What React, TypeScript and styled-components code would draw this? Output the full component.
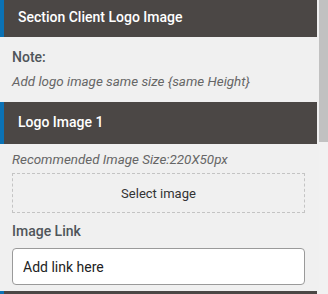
import React from 'react';
import styled, { createGlobalStyle } from 'styled-components';

const GlobalStyle = createGlobalStyle`
  html, body {
    margin: 0;
    padding: 0;
    background: #f0f0f0;
    font-family: Roboto, "Liberation Sans", Arial, sans-serif;
  }
`;

const Frame = styled.div`
  display: flex;
  width: 328px;
  height: 294px;
  overflow: hidden;
  background: #f0f0f0;
`;

const Panel = styled.div`
  width: 317px;
  flex: none;
  display: flex;
  flex-direction: column;
`;

const Gutter = styled.div`
  width: 2px;
  flex: none;
`;

const Scrollbar = styled.div`
  flex: 1;
  background: #f1f1f1;
`;

const Thumb = styled.div`
  height: 142px;
  background: #c1c1c1;
`;

const Header = styled.div<{ $h: number; $pb?: number }>`
  height: ${p => p.$h}px;
  flex: none;
  box-sizing: border-box;
  display: flex;
  align-items: center;
  padding: 0 0 ${p => p.$pb ?? 0}px 14px;
  background: #4b4745;
  border-left: 4px solid #0b72b5;
  color: #fff;
  font-size: 14px;
  font-weight: 500;
`;

const Body = styled.div<{ $pad: string }>`
  padding: ${p => p.$pad};
  display: flex;
  flex-direction: column;
`;

const Label = styled.div<{ $mt?: number }>`
  margin-top: ${p => p.$mt ?? 0}px;
  font-size: 14px;
  font-weight: 500;
  color: #4f555a;
  line-height: 20px;
`;

const Hint = styled.div<{ $mt?: number }>`
  margin-top: ${p => p.$mt ?? 0}px;
  font-size: 13.4px;
  font-style: italic;
  color: #666;
  line-height: 18px;
`;

const DropZone = styled.button`
  margin-top: 4px;
  width: 293px;
  height: 40px;
  box-sizing: border-box;
  border: 1px dashed #c4c4c4;
  background: transparent;
  font-family: inherit;
  font-size: 13px;
  color: #333;
  cursor: pointer;
`;

const LinkInput = styled.input`
  margin-top: 7px;
  width: 293px;
  height: 37px;
  box-sizing: border-box;
  border: 1px solid #9a9a9a;
  border-radius: 4px;
  background: #fff;
  padding: 0 10px;
  font-family: inherit;
  font-size: 14px;
  color: #222;
  &::placeholder {
    color: #222;
  }
`;

export default function App() {
  return (
    <>
      <GlobalStyle />
      <Frame>
        <Panel>
          <Header $h={37} $pb={3}>Section Client Logo Image</Header>
          <Body $pad="10px 12px 11px">
            <Label>Note:</Label>
            <Hint $mt={6}>Add logo image same size {'{same Height}'}</Hint>
          </Body>
          <Header $h={42} $pb={2}>Logo Image 1</Header>
          <Body $pad="7px 12px 6px">
            <Hint>Recommended Image Size:220X50px</Hint>
            <DropZone>Select image</DropZone>
            <Label $mt={8}>Image Link</Label>
            <LinkInput placeholder="Add link here" />
          </Body>
          <Header $h={10} />
        </Panel>
        <Gutter />
        <Scrollbar>
          <Thumb />
        </Scrollbar>
      </Frame>
    </>
  );
}
